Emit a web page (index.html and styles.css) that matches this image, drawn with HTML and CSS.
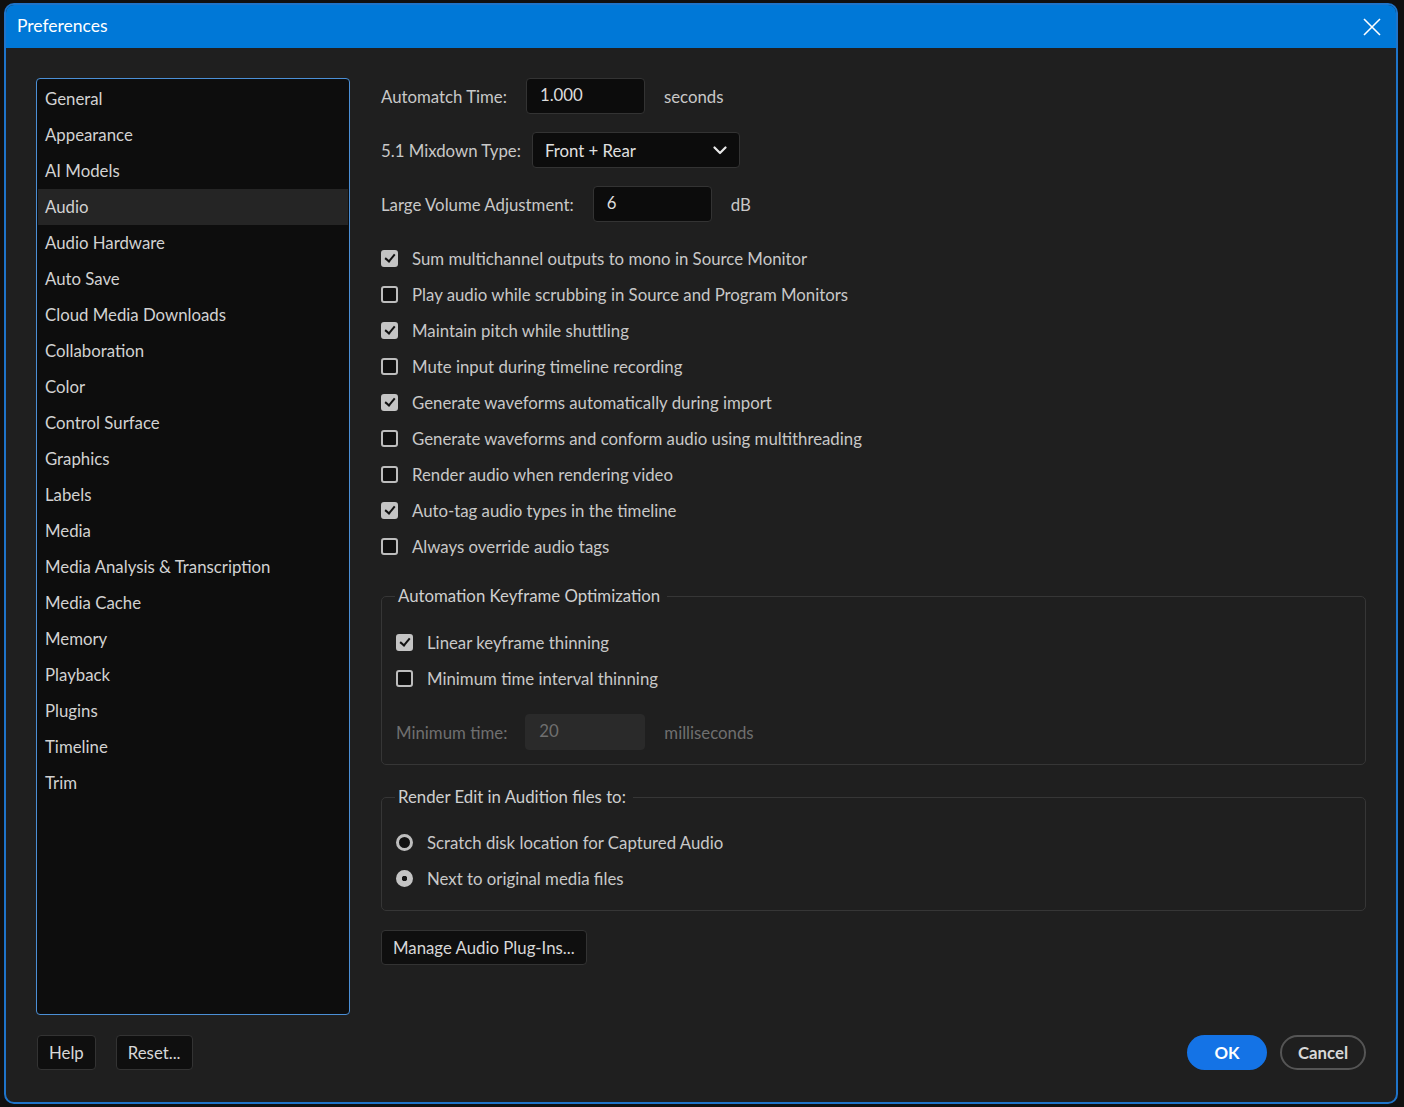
FILE: index.html
```html
<!DOCTYPE html>
<html lang="en">
<head>
    <meta charset="UTF-8">
    <title>Preferences</title>
    <link rel="stylesheet" href="styles.css">
</head>
<body>
    <div class="dialog">
        <div class="titlebar">
            <div class="title">Preferences</div>
            <svg class="close" width="18" height="18" viewBox="0 0 18 18">
                <path d="M1 1 L17 17 M17 1 L1 17" stroke="#ffffff" stroke-width="1.6" fill="none"/>
            </svg>
        </div>
        <div class="dialog-body">
            <div class="main">
                <div class="sidebar">
                    <div class="nav-item">General</div>
                    <div class="nav-item">Appearance</div>
                    <div class="nav-item">AI Models</div>
                    <div class="nav-item active">Audio</div>
                    <div class="nav-item">Audio Hardware</div>
                    <div class="nav-item">Auto Save</div>
                    <div class="nav-item">Cloud Media Downloads</div>
                    <div class="nav-item">Collaboration</div>
                    <div class="nav-item">Color</div>
                    <div class="nav-item">Control Surface</div>
                    <div class="nav-item">Graphics</div>
                    <div class="nav-item">Labels</div>
                    <div class="nav-item">Media</div>
                    <div class="nav-item">Media Analysis &amp; Transcription</div>
                    <div class="nav-item">Media Cache</div>
                    <div class="nav-item">Memory</div>
                    <div class="nav-item">Playback</div>
                    <div class="nav-item">Plugins</div>
                    <div class="nav-item">Timeline</div>
                    <div class="nav-item">Trim</div>
                </div>

                <div class="content">
                    <div class="field-row">
                        <span class="label">Automatch Time:</span>
                        <div class="input automatch">1.000</div>
                        <span class="unit">seconds</span>
                    </div>
                    <div class="field-row">
                        <span class="label">5.1 Mixdown Type:</span>
                        <div class="select">
                            <span>Front + Rear</span>
                            <svg width="14" height="9" viewBox="0 0 14 9">
                                <path d="M1.5 1.5 L7 7 L12.5 1.5" stroke="#e8e8e8" stroke-width="2.2" fill="none" stroke-linecap="round" stroke-linejoin="round"/>
                            </svg>
                        </div>
                    </div>
                    <div class="field-row">
                        <span class="label">Large Volume Adjustment:</span>
                        <div class="input volume">6</div>
                        <span class="unit">dB</span>
                    </div>

                    <div class="checks">
                        <div class="check-row"><span class="box checked"></span>Sum multichannel outputs to mono in Source Monitor</div>
                        <div class="check-row"><span class="box"></span>Play audio while scrubbing in Source and Program Monitors</div>
                        <div class="check-row"><span class="box checked"></span>Maintain pitch while shuttling</div>
                        <div class="check-row"><span class="box"></span>Mute input during timeline recording</div>
                        <div class="check-row"><span class="box checked"></span>Generate waveforms automatically during import</div>
                        <div class="check-row"><span class="box"></span>Generate waveforms and conform audio using multithreading</div>
                        <div class="check-row"><span class="box"></span>Render audio when rendering video</div>
                        <div class="check-row"><span class="box checked"></span>Auto-tag audio types in the timeline</div>
                        <div class="check-row"><span class="box"></span>Always override audio tags</div>
                    </div>

                    <fieldset class="group keyframes">
                        <legend>Automation Keyframe Optimization</legend>
                        <div class="check-row"><span class="box checked"></span>Linear keyframe thinning</div>
                        <div class="check-row"><span class="box"></span>Minimum time interval thinning</div>
                        <div class="field-row disabled">
                            <span class="label">Minimum time:</span>
                            <div class="input mintime">20</div>
                            <span class="unit">milliseconds</span>
                        </div>
                    </fieldset>

                    <fieldset class="group render">
                        <legend>Render Edit in Audition files to:</legend>
                        <div class="check-row"><span class="radio"></span>Scratch disk location for Captured Audio</div>
                        <div class="check-row"><span class="radio selected"></span>Next to original media files</div>
                    </fieldset>

                    <button class="btn plugins">Manage Audio Plug-Ins...</button>
                </div>
            </div>

            <div class="footer">
                <div class="footer-left">
                    <button class="btn">Help</button>
                    <button class="btn">Reset...</button>
                </div>
                <div class="footer-right">
                    <button class="pill ok">OK</button>
                    <button class="pill cancel">Cancel</button>
                </div>
            </div>
        </div>
    </div>
</body>
</html>
```

FILE: styles.css
```css
body {
    margin: 0;
    padding: 3px 6px 3px 4px;
    background-color: #101010;
    font-family: Lato, "Open Sans", sans-serif;
    font-size: 16.8px;
    color: #cfcfcf;
}

.dialog {
    height: 1101px;
    box-sizing: border-box;
    border: 2px solid #1f74c9;
    border-radius: 10px;
    background-color: #1f1f1f;
    display: flex;
    flex-direction: column;
    overflow: hidden;
}

.titlebar {
    height: 43px;
    background-color: #0078d7;
    display: flex;
    align-items: center;
    justify-content: space-between;
    padding: 0 15px 0 11px;
    flex-shrink: 0;
}

.titlebar .title {
    color: #ffffff;
    font-size: 17.5px;
    margin-top: -2px;
}

.dialog-body {
    flex: 1;
    display: flex;
    flex-direction: column;
    padding: 30px 30px 32px 30px;
}

.main {
    flex: 1;
    display: flex;
    gap: 31px;
}

/* left nav list */
.sidebar {
    width: 314px;
    box-sizing: border-box;
    border: 1.5px solid #4b8fd6;
    border-radius: 4px;
    background-color: #0d0d0d;
    padding: 1.5px 1px 0 1px;
}

.nav-item {
    height: 36px;
    line-height: 36px;
    padding-left: 7px;
    color: #d2d2d2;
}

.nav-item.active {
    background-color: #252525;
}

.content {
    flex: 1;
    display: flex;
    flex-direction: column;
}

.field-row {
    display: flex;
    align-items: center;
    height: 36px;
    margin-bottom: 18px;
}

.label {
    color: #c8c8c8;
}

.unit {
    color: #c8c8c8;
    margin-left: 19px;
}

.input {
    height: 36px;
    box-sizing: border-box;
    background-color: #0c0c0c;
    border: 1px solid #333333;
    border-radius: 4px;
    padding: 0 13px;
    line-height: 32px;
    color: #dcdcdc;
}

.input.automatch {
    width: 119px;
    margin-left: 19px;
}

.input.volume {
    width: 119px;
    margin-left: 19px;
}

.select {
    width: 208px;
    height: 36px;
    box-sizing: border-box;
    margin-left: 11px;
    background-color: #0c0c0c;
    border: 1px solid #333333;
    border-radius: 4px;
    display: flex;
    align-items: center;
    justify-content: space-between;
    padding: 0 12px 0 12px;
    color: #e0e0e0;
}

.checks {
    margin-top: 0;
}

.check-row {
    display: flex;
    align-items: center;
    height: 36px;
    color: #c8c8c8;
}

.box {
    width: 17px;
    height: 17px;
    box-sizing: border-box;
    border: 2px solid #bdbdbd;
    border-radius: 3px;
    background-color: #101010;
    margin-right: 14px;
    position: relative;
}

.box.checked {
    background-color: #c4c4c4;
    border-color: #c4c4c4;
}

.box.checked::after {
    content: "";
    position: absolute;
    left: 4px;
    top: 0px;
    width: 4px;
    height: 8px;
    border-right: 2.2px solid #111111;
    border-bottom: 2.2px solid #111111;
    transform: rotate(40deg);
}

.radio {
    width: 17px;
    height: 17px;
    box-sizing: border-box;
    border: 3px solid #bdbdbd;
    border-radius: 50%;
    background-color: #101010;
    margin-right: 14px;
}

.radio.selected {
    background-color: #c4c4c4;
    border-color: #c4c4c4;
    background-image: radial-gradient(circle, #151515 0 2.5px, transparent 3px);
}

.group {
    margin: 21px 0 0 0;
    border: 1px solid #363636;
    border-radius: 5px;
    padding: 17px 14px 14px 14px;
}

.group legend {
    padding: 0 7px 0 3px;
    margin-left: -1px;
    color: #cfcfcf;
    line-height: 22px;
}

.group.render {
    padding-top: 16px;
}

.group .field-row {
    margin: 18px 0 0 0;
}

.field-row.disabled .label,
.field-row.disabled .unit {
    color: #6f6f6f;
}

.input.mintime {
    width: 120px;
    margin-left: 18px;
    background-color: #2a2a2a;
    border-color: #2a2a2a;
    color: #6f6f6f;
}

.btn {
    font-family: inherit;
    font-size: 16.8px;
    color: #d8d8d8;
    background-color: #0f0f0f;
    border: 1px solid #333333;
    border-radius: 4px;
    height: 35px;
    padding: 0 11px;
    white-space: nowrap;
    cursor: pointer;
}

.btn.plugins {
    align-self: flex-start;
    margin-top: 19px;
    padding: 0 11px;
}

.footer {
    display: flex;
    justify-content: space-between;
    align-items: center;
    margin-top: 20px;
}

.footer-left {
    display: flex;
    gap: 20px;
    margin-left: 1px;
}

.footer-right {
    display: flex;
    gap: 13px;
}

.pill {
    font-family: inherit;
    font-size: 16.8px;
    height: 35px;
    border-radius: 18px;
    cursor: pointer;
}

.pill.ok {
    width: 80px;
    background-color: #1473e6;
    border: none;
    color: #ffffff;
    font-weight: bold;
}

.pill.cancel {
    width: 86px;
    background-color: transparent;
    border: 2px solid #555555;
    color: #d8d8d8;
    font-weight: bold;
}
```
